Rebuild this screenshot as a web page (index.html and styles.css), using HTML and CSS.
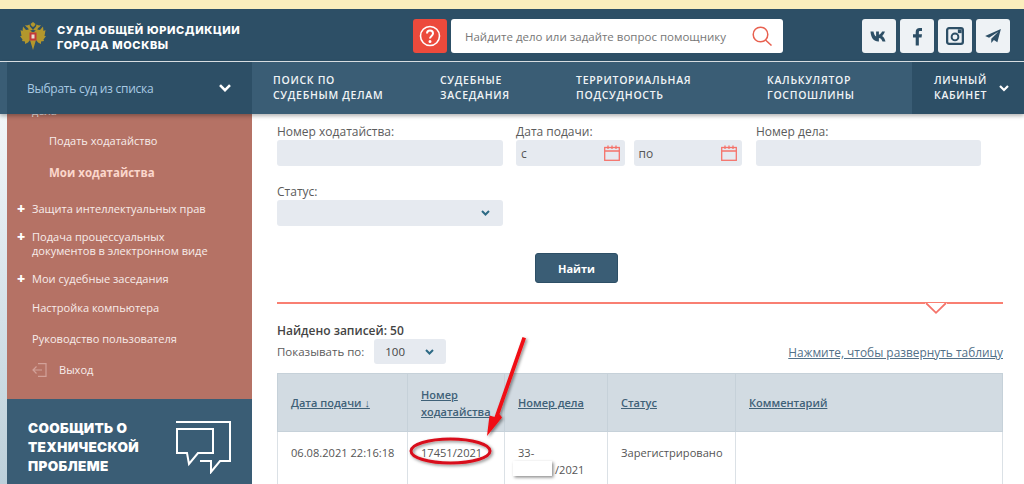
FILE: index.html
```html
<!DOCTYPE html>
<html lang="ru">
<head>
<meta charset="utf-8">
<title>Суды общей юрисдикции города Москвы</title>
<link rel="stylesheet" href="styles.css">
</head>
<body>
<div class="page">
  <div class="notice"></div>
  <header class="header">
    <div class="brand">
      <svg class="crest" width="26" height="28" viewBox="0 0 26 28">
        <g fill="#b3972c">
          <g>
            <path d="M12 10L9.500 7.500 6 8 3 4.500 2.500 9 .5 8 1.500 14 0 14 2.500 17.500 2 19 5 19.500 5 22 8 20.500 10 18 13 28V10z"/>
            <path d="M13 8L10 4.500 9.500 2.500 7 3.500 5 3 6.500 5 8 6 9 8.500z"/>
            <path d="M13 0l-2.500 2 1 2 1.500 1z"/>
          </g>
          <g transform="matrix(-1 0 0 1 26 0)">
            <path d="M12 10L9.500 7.500 6 8 3 4.500 2.500 9 .5 8 1.500 14 0 14 2.500 17.500 2 19 5 19.500 5 22 8 20.500 10 18 13 28V10z"/>
            <path d="M13 8L10 4.500 9.500 2.500 7 3.500 5 3 6.500 5 8 6 9 8.500z"/>
            <path d="M13 0l-2.500 2 1 2 1.500 1z"/>
          </g>
        </g>
        <rect x="9.500" y="10.500" width="7" height="8" fill="#c2393a"/>
        <rect x="11.500" y="12.500" width="3" height="4" fill="#e8e0d0"/>
      </svg>
      <div class="brand-text">СУДЫ ОБЩЕЙ ЮРИСДИКЦИИ<br>ГОРОДА МОСКВЫ</div>
    </div>
    <div class="search-group">
      <div class="help">
        <svg width="22" height="22" viewBox="0 0 22 22" fill="none" stroke="#fff" stroke-width="1.600"><circle cx="11" cy="11" r="9.500"/><path d="M8 8.600c0-4 6-4 6 0 0 2.400-3 2.400-3 5" stroke-width="2"/><circle cx="11" cy="16.500" r=".7" fill="#fff"/></svg>
      </div>
      <div class="search">
        <span>Найдите дело или задайте вопрос помощнику</span>
        <svg width="20" height="20" viewBox="0 0 20 20" fill="none" stroke="#e8604f" stroke-width="1.500"><circle cx="8.500" cy="8.500" r="7.300"/><path d="M13.500 14l6 5.500"/></svg>
      </div>
    </div>
    <div class="socials">
      <div class="social">
        <svg width="18" height="11" viewBox="0 0 17 11"><path d="M0 .5h3c.3 2 1.200 4.500 2.600 5V.5h2.800v3.200C9.700 3.500 11 2 11.600.5h2.800c-.4 1.800-1.800 3.600-2.800 4.400 1.200.7 2.700 2.300 3.400 5.600h-3c-.6-2-1.900-3.300-3.600-3.500v3.500H7.800C3.400 10.500.4 7 0 .5z" fill="#2d4f66"/></svg>
      </div>
      <div class="social">
        <svg width="9" height="19" viewBox="0 0 10 20"><path d="M3 20V11H0V7.500h3V5C3 2 4.800.5 7.300.5H10V4H8C6.800 4 6.500 4.500 6.500 5.500v2H10L9.500 11h-3v9z" fill="#2d4f66"/></svg>
      </div>
      <div class="social">
        <svg width="18" height="18" viewBox="0 0 19 19" fill="none" stroke="#2d4f66"><rect x="1.200" y="1.200" width="16.600" height="16.600" rx="2" stroke-width="2.400"/><circle cx="9.500" cy="10.500" r="3.600" stroke-width="2"/><rect x="12.500" y="2.500" width="4" height="4" fill="#2d4f66" stroke="none"/></svg>
      </div>
      <div class="social">
        <svg width="16" height="14" viewBox="0 0 18 16"><path d="M18 0L0 8l4.500 2L15 3 7 11v5l3-3.500 4 2.500z" fill="#2d4f66"/></svg>
      </div>
    </div>
  </header>
  <nav class="nav">
    <div class="court-select">
      <span>Выбрать суд из списка</span>
      <svg width="12" height="8" viewBox="0 0 12 8" fill="none" stroke="#fff" stroke-width="2.600"><path d="M1 1.200l5 5 5-5"/></svg>
    </div>
    <div class="nav-items">
      <a class="nav-item nav-a">ПОИСК ПО<br>СУДЕБНЫМ ДЕЛАМ</a>
      <a class="nav-item nav-b">СУДЕБНЫЕ<br>ЗАСЕДАНИЯ</a>
      <a class="nav-item nav-c">ТЕРРИТОРИАЛЬНАЯ<br>ПОДСУДНОСТЬ</a>
      <a class="nav-item nav-d">КАЛЬКУЛЯТОР<br>ГОСПОШЛИНЫ</a>
    </div>
    <div class="cabinet">
      <span>ЛИЧНЫЙ<br>КАБИНЕТ</span>
      <svg width="10" height="7" viewBox="0 0 10 7" fill="none" stroke="#fff" stroke-width="2.200"><path d="M1 1l4 4 4-4"/></svg>
    </div>
  </nav>
  <div class="content">
    <aside class="side">
      <div class="side-menu">
        <div class="m-clipped">дела</div>
        <div class="m-sub">Подать ходатайство</div>
        <div class="m-sub m-active">Мои ходатайства</div>
        <div class="m-item m-plus m-first">Защита интеллектуальных прав</div>
        <div class="m-item m-plus m-two">Подача процессуальных<br>документов в электронном виде</div>
        <div class="m-item m-plus m-three">Мои судебные заседания</div>
        <div class="m-item m-four">Настройка компьютера</div>
        <div class="m-item m-five">Руководство пользователя</div>
        <div class="m-item m-exit">
          <svg width="15" height="14" viewBox="0 0 15 14" fill="none" stroke="#d2a199" stroke-width="1.200"><path d="M6 .6h8v12.800H6M10 7H1M4.500 3.500L1 7l3.500 3.500"/></svg>
          <span>Выход</span>
        </div>
      </div>
      <div class="report">
        <div class="report-text">СООБЩИТЬ О<br>ТЕХНИЧЕСКОЙ<br>ПРОБЛЕМЕ</div>
        <svg class="report-icon" width="56" height="53" viewBox="0 0 56 53" fill="none" stroke="#fff" stroke-width="2"><path d="M1 8h36v24H22l-9 11-2-11H1z"/><path d="M0 1h54v39h-10l-9 11V40H24"/></svg>
      </div>
    </aside>
    <main class="main">
      <div class="filters">
        <label class="field f-wide"><span class="lbl">Номер ходатайства:</span><span class="inp"></span></label>
        <div class="field f-date">
          <span class="lbl">Дата подачи:</span>
          <div class="dates">
            <span class="inp inp-date">с<svg width="16" height="16" viewBox="0 0 16 16" fill="none" stroke="#f5736a" stroke-width="1.300"><rect x=".7" y="2.500" width="14.600" height="12.800"/><path d="M.7 6h14.600M4 .5v3.500M8 .5v3.500M12 .5v3.500"/></svg></span>
            <span class="inp inp-date">по<svg width="16" height="16" viewBox="0 0 16 16" fill="none" stroke="#f5736a" stroke-width="1.300"><rect x=".7" y="2.500" width="14.600" height="12.800"/><path d="M.7 6h14.600M4 .5v3.500M8 .5v3.500M12 .5v3.500"/></svg></span>
          </div>
        </div>
        <label class="field f-case"><span class="lbl">Номер дела:</span><span class="inp"></span></label>
      </div>
      <label class="field f-status">
        <span class="lbl">Статус:</span>
        <span class="inp inp-sel"><svg width="9" height="6" viewBox="0 0 9 6" fill="none" stroke="#2d6a85" stroke-width="2"><path d="M1 1l3.500 3.500L8 1"/></svg></span>
      </label>
      <div class="btn-row"><button class="btn">Найти</button></div>
      <div class="rule">
        <svg class="notch" width="22" height="12" viewBox="0 0 22 12" fill="none"><path d="M0 .5h22" stroke="#fff" stroke-width="3"/><path d="M1 0l10 9.800L21 0" stroke="#f5736a" stroke-width="1.800"/></svg>
      </div>
      <div class="found">Найдено записей: 50</div>
      <div class="show-row">
        <div class="show">
          <span>Показывать по:</span>
          <span class="page-size">100<svg width="9" height="6" viewBox="0 0 9 6" fill="none" stroke="#2d6a85" stroke-width="2"><path d="M1 1l3.500 3.500L8 1"/></svg></span>
        </div>
        <a class="expand">Нажмите, чтобы развернуть таблицу</a>
      </div>
      <table class="tbl">
        <thead>
          <tr>
            <th class="c1"><a>Дата подачи ↓</a></th>
            <th class="c2"><a>Номер ходатайства</a></th>
            <th class="c3"><a>Номер дела</a></th>
            <th class="c4"><a>Статус</a></th>
            <th class="c5"><a>Комментарий</a></th>
          </tr>
        </thead>
        <tbody>
          <tr>
            <td class="nowrap">06.08.2021 22:16:18</td>
            <td>17451/2021</td>
            <td>33-<br><span class="redacted-gap"></span>/2021</td>
            <td>Зарегистрировано</td>
            <td></td>
          </tr>
        </tbody>
      </table>
    </main>
  </div>
  <svg class="annot" width="1024" height="484" viewBox="0 0 1024 484">
    <defs><filter id="sh" x="-20%" y="-20%" width="140%" height="140%"><feDropShadow dx="1.500" dy="1.500" stdDeviation="1.500" flood-color="#000" flood-opacity=".45"/></filter></defs>
    <g filter="url(#sh)">
      <path d="M522.500 337l3.500 1.200L499.500 414l2.500 3.500L487 436l2.500-20.500 5 1.500z" fill="#f00d12"/>
      <ellipse cx="450.500" cy="451" rx="39.500" ry="12" fill="none" stroke="#d8101a" stroke-width="3"/>
      <rect x="513" y="461" width="39" height="15" fill="#fff"/>
    </g>
  </svg>
</div>
</body>
</html>
```
FILE: styles.css
```css
* { box-sizing: border-box; }
html, body { margin: 0; padding: 0; }
body { font-family: "Open Sans", "Liberation Sans", sans-serif; color: #555; background: #fff; }
.page { position: relative; width: 1024px; height: 484px; overflow: hidden; display: flex; flex-direction: column; }
.notice { height: 9px; background: #fbeebd; flex: none; }
.header { flex: none; height: 53px; background: #2d4f66; border-bottom: 1px solid #dfe6ea; display: flex; align-items: flex-start; position: relative; z-index: 3; }
.brand { flex: none; width: 413px; display: flex; align-items: flex-start; padding: 13px 0 0 20px; gap: 11px; }
.brand-text { margin-top: 1px; font-family: "Inter", "Liberation Sans", sans-serif; font-weight: 800; font-size: 11px; line-height: 15px; letter-spacing: .62px; color: #fff; }
.search-group { flex: none; display: flex; gap: 4px; padding-top: 10px; width: 449px; }
.help { flex: none; width: 34px; height: 34px; border-radius: 3px; background: #ec4a3c; display: flex; align-items: center; justify-content: center; }
.search { flex: none; width: 332px; height: 34px; background: #fff; border-radius: 3px; display: flex; align-items: center; justify-content: space-between; padding: 0 11px 0 14px; font-size: 11.500px; color: #777; }
.socials { flex: none; display: flex; gap: 4px; padding-top: 10px; }
.social { flex: none; width: 34px; height: 34px; border-radius: 3px; background: #eef2f5; display: flex; align-items: center; justify-content: center; }
.nav { flex: none; height: 52px; background: #3a5d75; display: flex; position: relative; z-index: 3; box-shadow: 0 2px 4px rgba(0,0,0,.3); color: #fff; }
.court-select { flex: none; margin-left: 7px; width: 245px; background: #2d4f66; display: flex; align-items: center; justify-content: space-between; padding: 0 21px 0 20px; font-size: 12px; letter-spacing: -.25px; color: #a9cbe4; }
.nav-items { flex: none; width: 660px; display: flex; }
.nav-item { font-size: 10.500px; line-height: 15px; font-weight: 600; letter-spacing: .7px; padding-top: 11px; color: #f0f4f6; }
.nav-a { margin-left: 21px; width: 167px; }
.nav-b { width: 136px; }
.nav-c { width: 191px; }
.nav-d { width: 144px; }
.cabinet { flex: none; width: 113px; background: #2d4f66; display: flex; align-items: center; gap: 12px; padding-left: 22px; font-size: 10.500px; line-height: 15px; font-weight: 600; letter-spacing: .7px; color: #f0f4f6; }
.content { flex: 1; display: flex; min-height: 0; background: #fff; }
.side { flex: none; width: 252px; padding-left: 7px; background: linear-gradient(#f2f6f8, #bcd0db) 0 0 / 7px 100% no-repeat; display: flex; flex-direction: column; }
.side-menu { flex: none; height: 292px; margin-top: -7px; background: #b57265; color: #f7ecea; font-size: 11.050px; position: relative; }
.m-clipped { position: absolute; left: 25px; top: -4px; line-height: 15px; }
.m-sub { padding-left: 42px; line-height: 16px; }
.m-clipped + .m-sub { padding-top: 26px; }
.m-active { margin-top: 16px; font-weight: 700; font-size: 11.500px; color: #fbd7cc; }
.m-item { padding-left: 25px; line-height: 14.500px; position: relative; }
.m-plus::before { content: "+"; position: absolute; left: 10px; top: 0; font-weight: 800; color: #fff; font-size: 14px; }
.m-first { margin-top: 21px; }
.m-two { margin-top: 13px; }
.m-three { margin-top: 13px; }
.m-four { margin-top: 15px; }
.m-five { margin-top: 16.500px; }
.m-exit { margin-top: 16px; display: flex; align-items: center; gap: 12px; }
.report { flex: none; height: 85px; background: #3a5d75; display: flex; padding: 0 20px 0 21px; justify-content: space-between; }
.report-text { font-family: "Inter", "Liberation Sans", sans-serif; font-weight: 900; font-size: 13.500px; line-height: 19px; letter-spacing: .35px; color: #fff; padding-top: 20px; }
.report-icon { margin-top: 22px; }
.main { flex: 1; min-width: 0; padding: 9px 21px 0 25px; font-size: 12px; }
.filters { display: flex; }
.field { display: block; }
.lbl { display: block; line-height: 17px; color: #5b5b5b; font-size: 12px; }
.inp { display: block; height: 26px; background: #e6eaf0; border-radius: 3px; }
.f-wide { width: 226px; }
.f-date { width: 226px; margin-left: 13px; }
.f-case { width: 225px; margin-left: 14px; }
.dates { display: flex; gap: 9px; }
.inp-date { flex: 1; display: flex; align-items: center; justify-content: space-between; padding: 0 5px; font-size: 12px; color: #555; }
.f-status { width: 226px; margin-top: 17px; }
.inp-sel { display: flex; align-items: center; justify-content: flex-end; padding-right: 13px; }
.btn-row { display: flex; justify-content: center; padding: 27px 127px 0 0; }
.btn { width: 83px; height: 30px; background: #3a5d75; border: 1px solid #2d4f66; border-radius: 3px; color: #fff; font-family: "Open Sans", "Liberation Sans", sans-serif; font-size: 11px; font-weight: 700; }
.rule { height: 2px; background: #f97f72; margin-top: 19px; position: relative; }
.notch { position: absolute; left: 648px; top: 1px; }
.found { margin-top: 18px; font-weight: 600; color: #444; line-height: 17px; }
.show-row { display: flex; justify-content: space-between; align-items: center; height: 25px; }
.show { display: flex; align-items: center; gap: 10px; color: #5b5b5b; font-size: 11.500px; }
.page-size { width: 72px; height: 25px; background: #e6eaf0; border-radius: 3px; display: flex; align-items: center; justify-content: space-between; padding: 0 12px 0 11px; color: #444; font-size: 11.500px; }
.expand { color: #527088; text-decoration: underline; font-size: 11.900px; }
.tbl { width: 726px; margin-top: 9px; border-collapse: collapse; table-layout: fixed; font-size: 11.100px; color: #555; border: 1px solid #d6dde3; }
.tbl th { height: 58px; background: #d2dbe2; text-align: left; font-weight: 600; font-size: 11px; padding: 0 12px 0 13px; border: 1px solid #c6d1d9; line-height: 17px; }
.tbl th a { color: #3f6178; text-decoration: underline; }
.tbl td { vertical-align: top; padding: 12px 12px 0 13px; height: 80px; line-height: 17px; border: 1px solid #dbe1e6; }
.tbl td.nowrap { white-space: nowrap; }
.c1 { width: 130px; }
.c2 { width: 97px; }
.c3 { width: 103px; }
.c4 { width: 128px; }
.redacted-gap { display: inline-block; width: 37px; }
.annot { position: absolute; left: 0; top: 0; pointer-events: none; z-index: 2; }
```
